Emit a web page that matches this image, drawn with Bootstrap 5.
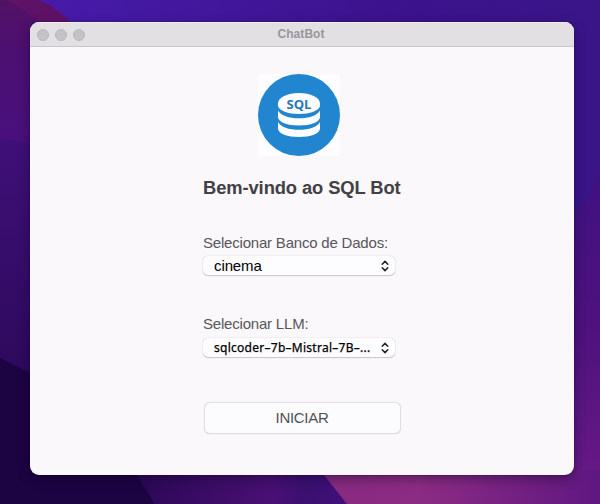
<!DOCTYPE html>
<html lang="pt-BR">
<head>
<meta charset="utf-8">
<meta name="viewport" content="width=device-width, initial-scale=1">
<title>ChatBot</title>
<link rel="stylesheet" href="https://cdn.jsdelivr.net/npm/bootstrap@5.3.0/dist/css/bootstrap.min.css">
<style>
  body { width: 600px; height: 504px; font-family: "Liberation Sans", Arial, sans-serif; background: #2c0a5c; }
  .wallpaper { z-index: 0; }
  .desktop { z-index: 1; padding: 22px 26px 29px 30px; height: 504px; }
  .app-window { height: 453px; border-radius: 9px; background: #faf8fb; box-shadow: 0 0 1px #0a0020, 0 4px 12px rgba(8,0,30,.38); }
  .title-bar { height: 25px; background: #e2e0e3; border-bottom: 1px solid #c8c6ca; border-top: 1px solid #f0eef2; padding-left: 7px; }
  .dot { width: 12px; height: 12px; background: #c4c2c7; border: 1px solid #b9b7bd; }
  .dots { gap: 6px; }
  .window-name { font: bold 12px/23px "Liberation Sans", Arial, sans-serif; color: #99969c; padding-right: 2px; letter-spacing: .08px; }
  .logo-box { width: 82px; height: 82px; margin: 27px 0 0 55px; background: #fdfcfe; }
  .panel { width: 197px; margin-left: 173px; }
  .welcome { font-size: 18.35px; line-height: 22px; margin: 21px 0 35px; color: #414044; letter-spacing: -.09px; }
  .field-label { font-size: 15px; line-height: 18px; margin-bottom: 4px; color: #58565b; letter-spacing: -.2px; }
  .picker { width: 192px; height: 19px; border-radius: 5px; background: #fdfcfe; font-size: 15px; line-height: 18px; color: #000; padding: 0 6px 0 11px; border: 0; box-shadow: 0 0 1px #aaa7b0, 0 1px 1px #cac7cf; letter-spacing: -.1px; }
  .picker:hover { background: #fdfcfe; }
  .picker + .field-label { margin-top: 40px; margin-bottom: 5px; }
  .model-name { font-family: "Noto Sans", "Open Sans", sans-serif; font-size: 12px; letter-spacing: .27px; -webkit-text-stroke: .25px #000; }
  .start { width: 195px; height: 30px; margin: 46px 0 0 1.5px; border: 0; border-radius: 5px; padding: 0; background: #fcfbfe; color: #525055; font-size: 15px; line-height: 30px; letter-spacing: -.3px; box-shadow: 0 0 1px 0.5px #dedbe3, 0 1px 1px #dad7de; }
</style>
<script src="https://cdn.jsdelivr.net/npm/bootstrap@5.3.0/dist/js/bootstrap.bundle.min.js"></script>
</head>
<body class="m-0 overflow-hidden position-relative">
<svg class="wallpaper position-absolute top-0 start-0" width="600" height="504" viewBox="0 0 600 504" aria-hidden="true">
  <defs>
    <linearGradient id="leftShade" x1="0" y1="0" x2="0" y2="1"><stop offset="0" stop-color="#521265"/><stop offset=".28" stop-color="#4c1070"/><stop offset="1" stop-color="#481080"/></linearGradient>
    <linearGradient id="midShade" x1="0" y1="0" x2="0" y2="1"><stop offset="0" stop-color="#3f1078"/><stop offset="1" stop-color="#2b0959"/></linearGradient>
    <linearGradient id="topShade" x1="0" y1="0" x2="1" y2="0"><stop offset="0" stop-color="#481cac"/><stop offset=".7" stop-color="#3b128b"/><stop offset="1" stop-color="#391588"/></linearGradient>
    <linearGradient id="rightShade" x1="0" y1="0" x2="0" y2="1"><stop offset="0" stop-color="#3f1181"/><stop offset=".55" stop-color="#4f127e"/><stop offset="1" stop-color="#651985"/></linearGradient>
    <linearGradient id="bottomShade" x1="0" y1="0" x2="1" y2="0"><stop offset="0" stop-color="#2b0856"/><stop offset=".65" stop-color="#491074"/><stop offset=".8" stop-color="#3b1070"/><stop offset="1" stop-color="#40107a"/></linearGradient>
    <linearGradient id="pinkShade" x1="0" y1="0" x2="1" y2="0"><stop offset="0" stop-color="#882a80"/><stop offset=".35" stop-color="#8c2c83"/><stop offset="1" stop-color="#5f1781"/></linearGradient>
  </defs>
  <rect width="600" height="504" fill="url(#topShade)"/>
  <path d="M0 0H22L72 24V160H0z" fill="url(#leftShade)"/>
  <path d="M6 0H40Q58 8 72 24H42Q24 10 6 0z" fill="#5e1267"/>
  <path d="M0 138L34 144V400H0z" fill="url(#midShade)"/>
  <path d="M0 358L34 375V470H136L155 504H0z" fill="#1c0342"/>
  <path d="M134 470H325L346 504H155z" fill="url(#bottomShade)"/>
  <path d="M600 170Q588 204 570 220V470H600z" fill="url(#rightShade)"/>
  <path d="M320 470H600V504H347z" fill="url(#pinkShade)"/>
</svg>
<main class="desktop position-relative">
  <section class="app-window overflow-hidden">
    <header class="title-bar d-flex align-items-center position-relative">
      <div class="dots d-flex"><span class="dot rounded-circle"></span><span class="dot rounded-circle"></span><span class="dot rounded-circle"></span></div>
      <span class="window-name position-absolute start-0 end-0 text-center">ChatBot</span>
    </header>
    <div class="panel d-flex flex-column align-items-start text-nowrap">
      <div class="logo-box">
        <svg class="d-block" width="82" height="82" viewBox="0 0 82 82" role="img" aria-label="SQL">
          <circle cx="41" cy="41" r="41" fill="#2185d0"/>
          <g fill="#fdfcfe">
            <path d="M20 29.500C20 23.500 29.500 19 41 19S62 23.500 62 29.500V32C61 36.500 52 40 41 40S21 36.500 20 32z"/>
            <path d="M20 36.500C22.500 41.500 31 44.300 41 44.300S59.500 41.500 62 36.500V43C62 48 52.500 51.500 41 51.500S20 48 20 43z"/>
            <path d="M20 48C22.500 53 31 55.800 41 55.800S59.500 53 62 48V54.500C62 59.500 52.500 63 41 63S20 59.500 20 54.500z"/>
          </g>
          <text x="41" y="34.500" text-anchor="middle" font-family="Open Sans, sans-serif" font-weight="700" font-size="13" textLength="25" lengthAdjust="spacingAndGlyphs" fill="#2878b8">SQL</text>
        </svg>
      </div>
      <h1 class="welcome fw-bold">Bem-vindo ao SQL Bot</h1>
      <label class="field-label" id="db-label">Selecionar Banco de Dados:</label>
      <button type="button" class="picker btn d-flex align-items-center justify-content-between" aria-labelledby="db-label">
        <span>cinema</span>
        <svg width="8" height="12" viewBox="0 0 8 12" fill="none" stroke="#222" stroke-width="1.500" stroke-linecap="round" stroke-linejoin="round"><path d="M1.200 4.200L4 1.400L6.800 4.200M1.200 7.800L4 10.600L6.800 7.800"/></svg>
      </button>
      <label class="field-label" id="llm-label">Selecionar LLM:</label>
      <button type="button" class="picker btn d-flex align-items-center justify-content-between" aria-labelledby="llm-label">
        <span class="model-name">sqlcoder–7b–Mistral–7B–...</span>
        <svg width="8" height="12" viewBox="0 0 8 12" fill="none" stroke="#222" stroke-width="1.500" stroke-linecap="round" stroke-linejoin="round"><path d="M1.200 4.200L4 1.400L6.800 4.200M1.200 7.800L4 10.600L6.800 7.800"/></svg>
      </button>
      <button type="button" class="start btn">INICIAR</button>
    </div>
  </section>
</main>
</body>
</html>
